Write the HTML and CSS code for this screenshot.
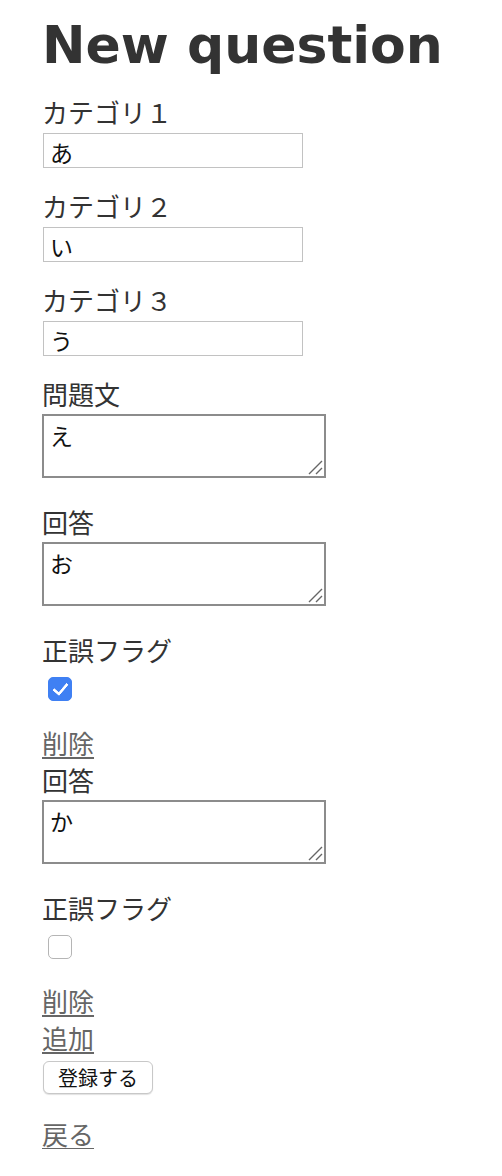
FILE: index.html
```html
<!DOCTYPE html>
<html lang="ja">
<head>
<meta charset="utf-8">
<title>New question</title>
<link rel="stylesheet" href="styles.css">
</head>
<body>
<main class="page">
  <h1 class="title">New question</h1>
  <form class="form">
    <div class="field">
      <label class="label">カテゴリ１</label>
      <input class="text" type="text" value="あ">
    </div>
    <div class="field">
      <label class="label">カテゴリ２</label>
      <input class="text" type="text" value="い">
    </div>
    <div class="field">
      <label class="label">カテゴリ３</label>
      <input class="text" type="text" value="う">
    </div>
    <div class="field field-area">
      <label class="label">問題文</label>
      <span class="area-wrap">
        <textarea class="area">え</textarea>
        <svg class="grip" width="16" height="16" viewBox="0 0 16 16" aria-hidden="true"><path d="M2 15 L15 2 M9 15 L15 9" stroke="#666" stroke-width="1.4" fill="none"/></svg>
      </span>
    </div>

    <div class="answer">
      <div class="field field-area">
        <label class="label">回答</label>
        <span class="area-wrap">
          <textarea class="area">お</textarea>
          <svg class="grip" width="16" height="16" viewBox="0 0 16 16" aria-hidden="true"><path d="M2 15 L15 2 M9 15 L15 9" stroke="#666" stroke-width="1.4" fill="none"/></svg>
        </span>
      </div>
      <div class="field field-check">
        <label class="label">正誤フラグ</label>
        <input class="check" type="checkbox" checked>
      </div>
      <a class="link" href="#">削除</a>
    </div>

    <div class="answer">
      <div class="field field-area">
        <label class="label">回答</label>
        <span class="area-wrap">
          <textarea class="area">か</textarea>
          <svg class="grip" width="16" height="16" viewBox="0 0 16 16" aria-hidden="true"><path d="M2 15 L15 2 M9 15 L15 9" stroke="#666" stroke-width="1.4" fill="none"/></svg>
        </span>
      </div>
      <div class="field field-check">
        <label class="label">正誤フラグ</label>
        <input class="check" type="checkbox">
      </div>
      <a class="link" href="#">削除</a>
    </div>

    <a class="link" href="#">追加</a>
    <div class="actions">
      <button class="submit" type="button">登録する</button>
    </div>
  </form>
  <a class="link back" href="#">戻る</a>
</main>
</body>
</html>
```
FILE: styles.css
```css
html, body {
  margin: 0;
  padding: 0;
  background: #ffffff;
}

body {
  font-family: "Noto Sans CJK JP", "Noto Sans", sans-serif;
  color: #333333;
}

.page {
  padding: 15px 0 0 42px;
  display: flex;
  flex-direction: column;
  align-items: flex-start;
}

.title {
  margin: 0;
  font-family: "DejaVu Sans", Verdana, sans-serif;
  font-weight: bold;
  font-size: 52px;
  line-height: 60px;
  color: #333333;
}

.form {
  margin-top: 22px;
  display: flex;
  flex-direction: column;
  align-items: flex-start;
}

.field {
  display: flex;
  flex-direction: column;
  align-items: flex-start;
  margin-bottom: 23px;
}

.label {
  display: block;
  font-size: 26px;
  line-height: 30px;
  height: 30px;
  margin-bottom: 6px;
  color: #333333;
}

.text {
  box-sizing: border-box;
  width: 260px;
  height: 35px;
  margin: 0 0 0 1px;
  padding: 2px 6px 0;
  border: 1px solid #c2c2c2;
  border-radius: 0;
  font-family: "Noto Sans CJK JP", sans-serif;
  font-size: 23px;
  color: #111111;
  background: #ffffff;
  outline: none;
}

.field-area {
  margin-bottom: 29px;
}

.field-area .label {
  margin-bottom: 5px;
}

.area-wrap {
  position: relative;
  display: block;
  width: 284px;
  height: 64px;
}

.area {
  display: block;
  box-sizing: border-box;
  width: 284px;
  height: 64px;
  margin: 0;
  padding: 5px 6px;
  border: 2px solid #8c8c8c;
  border-radius: 0;
  font-family: "Noto Sans CJK JP", sans-serif;
  font-size: 23px;
  line-height: 28px;
  color: #111111;
  background: #ffffff;
  resize: none;
  outline: none;
  overflow: hidden;
}

.grip {
  position: absolute;
  right: 3px;
  bottom: 3px;
}

.field-check {
  margin-bottom: 27px;
}

.field-check .label {
  margin-bottom: 12px;
}

.check {
  appearance: none;
  -webkit-appearance: none;
  box-sizing: border-box;
  width: 24px;
  height: 24px;
  margin: 0 0 0 6px;
  border: 1px solid #b5b5b5;
  border-radius: 5px;
  background: #ffffff;
  position: relative;
}

.check:checked {
  border-color: #3f80f3;
  background: #3f80f3;
}

.check:checked::after {
  content: "";
  position: absolute;
  left: 7px;
  top: 2px;
  width: 6px;
  height: 12px;
  border-right: 3px solid #ffffff;
  border-bottom: 3px solid #ffffff;
  border-radius: 1px;
  transform: rotate(40deg);
}

.answer {
  display: flex;
  flex-direction: column;
  align-items: flex-start;
  margin-bottom: 7px;
}

.link {
  display: block;
  font-size: 26px;
  line-height: 30px;
  height: 30px;
  color: #666666;
  text-decoration: underline;
  text-underline-offset: 3px;
  text-decoration-thickness: 2px;
}

.actions {
  margin-top: 8px;
}

.submit {
  box-sizing: border-box;
  width: 110px;
  height: 33px;
  margin: 0 0 0 1px;
  padding: 0;
  border: 1px solid #c8c8c8;
  border-radius: 6px;
  background: #ffffff;
  box-shadow: 0 1px 1px rgba(0, 0, 0, 0.12);
  font-family: "Noto Sans CJK JP", sans-serif;
  font-size: 20px;
  color: #111111;
}

.back {
  margin-top: 25px;
}
```
